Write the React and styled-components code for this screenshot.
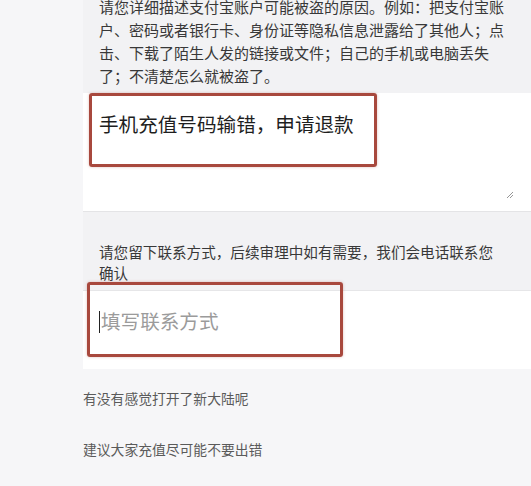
import React from "react";
import styled, { createGlobalStyle } from "styled-components";

const GlobalStyle = createGlobalStyle`
  html, body {
    margin: 0;
    padding: 0;
    background: #f6f6f8;
    font-family: "Noto Sans CJK SC", "Noto Sans", sans-serif;
    overflow: hidden;
  }
`;

const Page = styled.div`
  width: 531px;
  height: 486px;
  overflow: hidden;
  background: #f6f6f8;
`;

const Panel = styled.section`
  margin-left: 83px;
  background: #f2f2f4;
`;

const Hint = styled.p`
  margin: ${(p) => p.$margin || "0"};
  padding: ${(p) => p.$padding || "0 16px"};
  font-size: ${(p) => p.$size || "15px"};
  line-height: ${(p) => p.$lh || "23px"};
  color: #383838;
`;

const Field = styled.div`
  position: relative;
  background: #fff;
  height: ${(p) => p.$height};
  border-top: ${(p) => (p.$topLine ? "1px solid #e6e6e8" : "none")};
  border-bottom: ${(p) => (p.$bottomLine ? "1px solid #e4e4e6" : "none")};
  padding: ${(p) => p.$padding};
  font-size: 19.6px;
  line-height: 27px;
  color: ${(p) => (p.$placeholder ? "#9b9b9b" : "#1e1e1e")};
  box-sizing: border-box;
`;

const Caret = styled.span`
  display: inline-block;
  width: 1px;
  height: 22px;
  background: #222;
  vertical-align: -4px;
  margin-right: 1px;
`;

// red annotation frames drawn over the fields
const Mark = styled.div`
  position: absolute;
  left: ${(p) => p.$left}px;
  top: ${(p) => p.$top}px;
  width: ${(p) => p.$w}px;
  height: ${(p) => p.$h}px;
  border: 3px solid #a8483d;
  border-radius: 3px;
  box-sizing: border-box;
  box-shadow: 0 0 3px rgba(168, 72, 61, 0.35);
  pointer-events: none;
`;

const Grip = styled.svg`
  position: absolute;
  right: 17px;
  bottom: 12px;
`;

const Notes = styled.div`
  padding: 19px 0 0 83px;
  display: flex;
  flex-direction: column;
  gap: 31px;
`;

const Note = styled.p`
  margin: 0;
  font-size: 13.8px;
  line-height: 20px;
  color: #5a5a5a;
`;

export default function App() {
  return (
    <Page>
      <GlobalStyle />
      <Panel>
        <Hint $margin="-5px 0 0" $padding="0 16px 6px">
          请您详细描述支付宝账户可能被盗的原因。例如：把支付宝账户、密码或者银行卡、身份证等隐私信息泄露给了其他人；点击、下载了陌生人发的链接或文件；自己的手机或电脑丢失了；不清楚怎么就被盗了。
        </Hint>
        <Field $height="119px" $padding="17px 16px" $bottomLine>
          手机充值号码输错，申请退款
          <Mark $left={6} $top={0} $w={288} $h={74} />
          <Grip width="8" height="8" viewBox="0 0 8 8">
            <path d="M1 7L7 1M4 7L7 4" stroke="#8a8a8a" strokeWidth="0.9" />
          </Grip>
        </Field>
        <Hint $size="14.6px" $lh="21px" $padding="29px 30px 7px 16px">
          请您留下联系方式，后续审理中如有需要，我们会电话联系您确认
        </Hint>
        <Field $height="79px" $padding="16px 16px" $topLine $placeholder>
          <Caret />
          填写联系方式
          <Mark $left={4} $top={-9} $w={256} $h={75} />
        </Field>
      </Panel>
      <Notes>
        <Note>有没有感觉打开了新大陆呢</Note>
        <Note>建议大家充值尽可能不要出错</Note>
      </Notes>
    </Page>
  );
}
